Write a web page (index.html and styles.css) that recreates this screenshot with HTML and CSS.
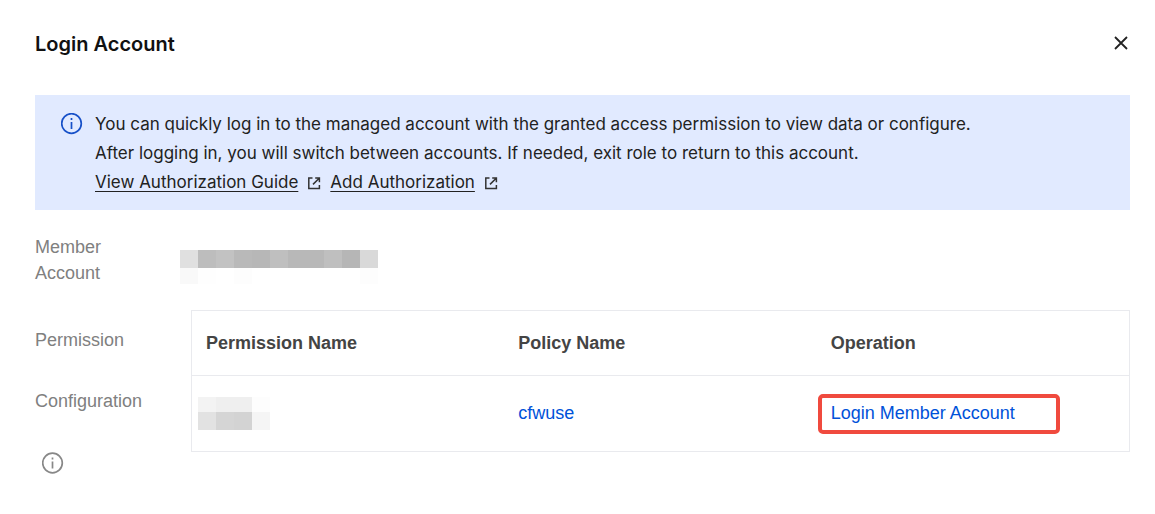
FILE: index.html
```html
<!DOCTYPE html>
<html lang="en">
<head>
  <meta charset="UTF-8" />
  <meta name="viewport" content="width=device-width, initial-scale=1.0" />
  <title>Login Account</title>
  <link rel="stylesheet" href="styles.css">
</head>
<body>
  <main class="dialog">
    <header class="dialog-header">
      <h1>Login Account</h1>
      <button class="btn-close" type="button" aria-label="Close">
        <svg width="18" height="18" viewBox="0 0 18 18" fill="none" stroke="#222" stroke-width="1.8">
          <path d="M3 2l12 12M15 2L3 14" />
        </svg>
      </button>
    </header>

    <section class="notice">
      <svg class="notice-icon" width="22" height="22" viewBox="0 0 22 22" fill="none" stroke="#1650c8" stroke-width="1.7">
        <circle cx="10.5" cy="10.5" r="9.8" />
        <path d="M10.5 9v7M10.5 5v2" />
      </svg>
      <div class="notice-text">
        <p>You can quickly log in to the managed account with the granted access permission to view data or configure.</p>
        <p>After logging in, you will switch between accounts. If needed, exit role to return to this account.</p>
        <p class="notice-links">
          <a href="#guide">View Authorization Guide</a>
          <svg width="14" height="14" viewBox="0 0 14 14" fill="none" stroke="#333" stroke-width="1.5">
            <path d="M5.5 2H1.8v10.6h10.6V9M8.2 2h4.2v4.2M12.2 2.2L6 8.4" />
          </svg>
          <a href="#add">Add Authorization</a>
          <svg width="14" height="14" viewBox="0 0 14 14" fill="none" stroke="#333" stroke-width="1.5">
            <path d="M5.5 2H1.8v10.6h10.6V9M8.2 2h4.2v4.2M12.2 2.2L6 8.4" />
          </svg>
        </p>
      </div>
    </section>

    <section class="form-row">
      <div class="label">Member Account</div>
      <div class="member-value">
        <!-- hidden account name -->
        <svg width="198" height="34" viewBox="0 0 198 34" shape-rendering="crispEdges">
          <rect width="18" height="18" fill="#e0e0e0" />
          <rect x="18" width="18" height="18" fill="#bdbdbd" />
          <rect x="36" width="18" height="18" fill="#c2c2c2" />
          <rect x="54" width="18" height="18" fill="#b9b9b9" />
          <rect x="72" width="18" height="18" fill="#b7b7b7" />
          <rect x="90" width="18" height="18" fill="#bfbfbf" />
          <rect x="108" width="36" height="18" fill="#b8b8b8" />
          <rect x="144" width="18" height="18" fill="#bfbfbf" />
          <rect x="162" width="18" height="18" fill="#b6b6b6" />
          <rect x="180" width="18" height="18" fill="#d9d9d9" />
          <rect y="18" width="18" height="16" fill="#f9f9f9" />
          <rect x="18" y="18" width="18" height="16" fill="#fefefe" />
          <rect x="54" y="18" width="18" height="16" fill="#fdfdfd" />
          <rect x="180" y="18" width="18" height="16" fill="#fdfdfd" />
        </svg>
      </div>
    </section>

    <section class="form-row">
      <div class="label label-tall">
        Permission Configuration
        <svg class="label-icon" width="22" height="22" viewBox="0 0 22 22" fill="none" stroke="#888" stroke-width="1.7">
          <circle cx="10.5" cy="11" r="9.8" />
          <path d="M10.5 9.5v7M10.5 5.5v2" />
        </svg>
      </div>
      <table class="permission-table">
        <thead>
          <tr>
            <th>Permission Name</th>
            <th>Policy Name</th>
            <th>Operation</th>
          </tr>
        </thead>
        <tbody>
          <tr>
            <td class="masked">
              <svg width="72" height="33" viewBox="0 0 72 33" shape-rendering="crispEdges">
                <rect width="18" height="15" fill="#f3f3f3" />
                <rect x="18" width="36" height="15" fill="#efefef" />
                <rect x="54" width="18" height="15" fill="#fdfdfd" />
                <rect y="15" width="18" height="18" fill="#e2e2e2" />
                <rect x="18" y="15" width="18" height="18" fill="#d5d5d5" />
                <rect x="36" y="15" width="18" height="18" fill="#d3d3d3" />
                <rect x="54" y="15" width="18" height="18" fill="#f5f5f5" />
              </svg>
            </td>
            <td><a href="#policy">cfwuse</a></td>
            <td><a class="login-link" href="#login">Login Member Account</a></td>
          </tr>
        </tbody>
      </table>
    </section>
  </main>
</body>
</html>
```
FILE: styles.css
```css
* {
  box-sizing: border-box;
}

body {
  margin: 0;
  font-family: "Liberation Sans", Arial, sans-serif;
  font-size: 18px;
  background-color: #fff;
  color: #222;
}

.dialog {
  padding: 28px 25px 20px 35px;
}

.dialog-header {
  display: flex;
  justify-content: space-between;
  align-items: center;
  height: 32px;
  margin-bottom: 35px;
}

.dialog-header h1 {
  margin: 0;
  font-family: Inter, sans-serif;
  font-size: 20px;
  font-weight: 600;
  color: #111;
}

.btn-close {
  display: flex;
  padding: 0;
  border: none;
  background: none;
  cursor: pointer;
}

.notice {
  display: flex;
  gap: 12px;
  padding: 15px 26px 13px;
  background-color: #e1eaff;
  font-family: Inter, sans-serif;
  font-size: 17px;
  line-height: 29px;
}

.notice-icon {
  flex: none;
  margin-top: 3px;
}

.notice p {
  margin: 0;
}

.notice-links {
  display: flex;
  align-items: center;
  gap: 9px;
}

.notice-links a {
  color: #222;
  text-decoration: underline;
  text-decoration-thickness: 1px;
  text-underline-offset: 3px;
}

.form-row {
  display: flex;
  align-items: flex-start;
  margin-top: 24px;
}

.label {
  flex: none;
  width: 145px;
  padding-right: 36px;
  color: #808080;
  line-height: 26px;
}

.label-tall {
  line-height: 61px;
}

.label-icon {
  display: block;
  margin: 20px 7px;
}

.member-value {
  display: flex;
  padding-top: 16px;
}

.permission-table {
  flex: 1;
  width: 100%;
  margin-left: 11px;
  border: 1px solid #e9eaee;
  border-spacing: 0;
  table-layout: fixed;
}

.permission-table th,
.permission-table td {
  padding: 0 14px;
  text-align: left;
}

.permission-table th {
  height: 65px;
  border-bottom: 1px solid #e9eaee;
  color: #444;
}

.permission-table td {
  height: 75px;
}

.permission-table .masked {
  padding-left: 6px;
}

.masked svg {
  display: block;
}

.permission-table a {
  color: #0052d9;
  text-decoration: none;
}

.login-link {
  position: relative;
}

/* highlight frame around the login action */
.login-link::after {
  content: "";
  position: absolute;
  top: -9px;
  right: -45px;
  bottom: -11px;
  left: -13px;
  border: 4px solid #f04a3e;
  border-radius: 5px;
}
```
